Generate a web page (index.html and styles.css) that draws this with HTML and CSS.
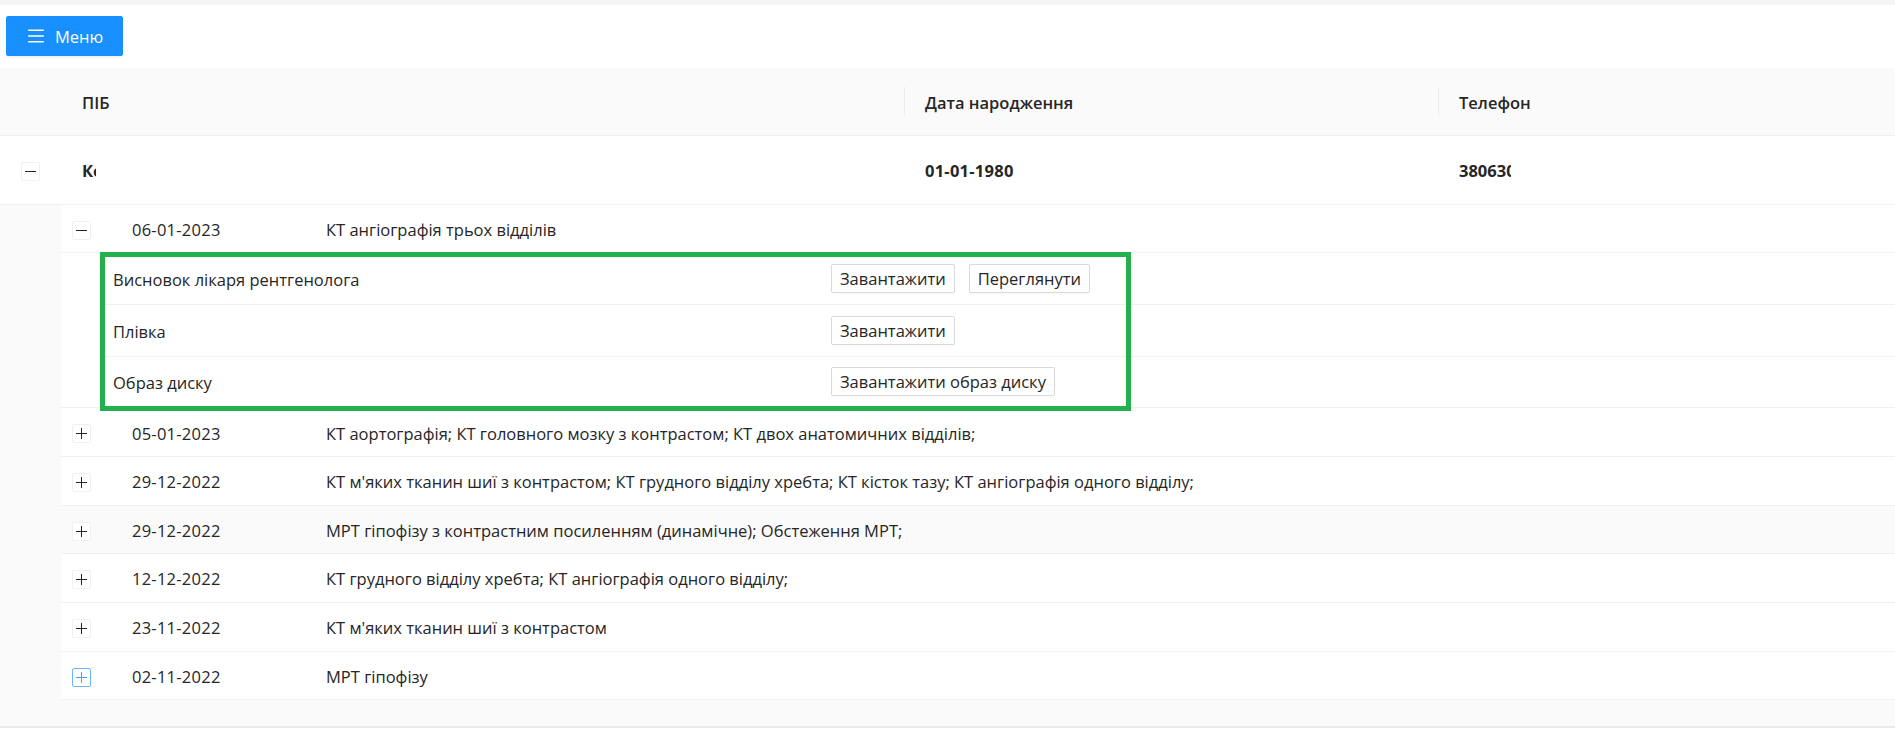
FILE: index.html
```html
<!DOCTYPE html>
<html lang="uk">
<head>
<meta charset="utf-8">
<title>Пацієнти</title>
<link rel="stylesheet" href="styles.css">
</head>
<body>
<div class="topbar"></div>
<div class="toolbar">
  <button class="btn-menu" type="button">
    <svg class="menu-icon" width="16" height="14" viewBox="0 0 16 14" aria-hidden="true">
      <path d="M0.75 1.25H15.25M0.75 7H15.25M0.75 12.75H15.25" stroke="#fff" stroke-width="1.5" stroke-linecap="round" fill="none"/>
    </svg>
    <span>Меню</span>
  </button>
</div>

<table class="patients">
  <colgroup>
    <col class="col-exp">
    <col class="col-name">
    <col class="col-dob">
    <col>
  </colgroup>
  <thead>
    <tr>
      <th></th>
      <th>ПІБ</th>
      <th class="sep">Дата народження</th>
      <th class="sep">Телефон</th>
    </tr>
  </thead>
  <tbody>
    <tr class="main-row">
      <td class="exp-cell"><button class="toggle" type="button" aria-label="Згорнути"></button></td>
      <td><span class="clip clip-name">Ко</span></td>
      <td class="date">01-01-1980</td>
      <td><span class="clip clip-phone">380630</span></td>
    </tr>
    <tr class="expanded-row">
      <td colspan="4" class="expanded-cell">
        <table class="visits">
          <colgroup>
            <col class="v-exp">
            <col class="v-date">
            <col>
          </colgroup>
          <tbody>
            <tr>
              <td class="v-exp-cell"><button class="toggle" type="button" aria-label="Згорнути"></button></td>
              <td class="date">06-01-2023</td>
              <td>КТ ангіографія трьох відділів</td>
            </tr>
            <tr class="files-row">
              <td colspan="3" class="files-cell">
                <div class="files">
                  <div class="file-row">
                    <div class="file-name">Висновок лікаря рентгенолога</div>
                    <div class="file-actions">
                      <button class="btn" type="button">Завантажити</button>
                      <button class="btn" type="button">Переглянути</button>
                    </div>
                  </div>
                  <div class="file-row">
                    <div class="file-name">Плівка</div>
                    <div class="file-actions">
                      <button class="btn" type="button">Завантажити</button>
                    </div>
                  </div>
                  <div class="file-row">
                    <div class="file-name">Образ диску</div>
                    <div class="file-actions">
                      <button class="btn" type="button">Завантажити образ диску</button>
                    </div>
                  </div>
                </div>
                <div class="highlight"></div>
              </td>
            </tr>
            <tr>
              <td class="v-exp-cell"><button class="toggle plus" type="button" aria-label="Розгорнути"></button></td>
              <td class="date">05-01-2023</td>
              <td>КТ аортографія; КТ головного мозку з контрастом; КТ двох анатомичних відділів;</td>
            </tr>
            <tr>
              <td class="v-exp-cell"><button class="toggle plus" type="button" aria-label="Розгорнути"></button></td>
              <td class="date">29-12-2022</td>
              <td>КТ м'яких тканин шиї з контрастом; КТ грудного відділу хребта; КТ кісток тазу; КТ ангіографія одного відділу;</td>
            </tr>
            <tr class="hovered">
              <td class="v-exp-cell"><button class="toggle plus" type="button" aria-label="Розгорнути"></button></td>
              <td class="date">29-12-2022</td>
              <td>МРТ гіпофізу з контрастним посиленням (динамічне); Обстеження МРТ;</td>
            </tr>
            <tr>
              <td class="v-exp-cell"><button class="toggle plus" type="button" aria-label="Розгорнути"></button></td>
              <td class="date">12-12-2022</td>
              <td>КТ грудного відділу хребта; КТ ангіографія одного відділу;</td>
            </tr>
            <tr>
              <td class="v-exp-cell"><button class="toggle plus" type="button" aria-label="Розгорнути"></button></td>
              <td class="date">23-11-2022</td>
              <td>КТ м'яких тканин шиї з контрастом</td>
            </tr>
            <tr>
              <td class="v-exp-cell"><button class="toggle plus focused" type="button" aria-label="Розгорнути"></button></td>
              <td class="date">02-11-2022</td>
              <td>МРТ гіпофізу</td>
            </tr>
          </tbody>
        </table>
      </td>
    </tr>
  </tbody>
</table>
</body>
</html>
```

FILE: styles.css
```css
* { box-sizing: border-box; }

html, body {
  margin: 0;
  padding: 0;
  background: #fff;
}

body {
  font-family: "Open Sans", "Noto Sans", sans-serif;
  font-size: 16.5px;
  line-height: 27.66px;
  color: #262626;
}

.topbar {
  height: 5px;
  background: #f5f5f5;
}

.toolbar {
  padding: 11px 6px 12px;
}

.btn-menu {
  display: inline-flex;
  align-items: center;
  gap: 11px;
  width: 117px;
  height: 40px;
  padding: 0 0 0 21px;
  border: 1px solid #1890ff;
  border-radius: 2px;
  background: #1890ff;
  color: #fff;
  font-family: inherit;
  font-size: 16.5px;
  box-shadow: 0 2px 0 rgba(0, 0, 0, 0.045);
  cursor: pointer;
}

.menu-icon { display: block; }

table {
  border-collapse: collapse;
  border-spacing: 0;
  table-layout: fixed;
  width: 100%;
}

.col-exp { width: 61px; }
.col-name { width: 843px; }
.col-dob { width: 534px; }

.date { letter-spacing: 0.25px; }

.patients th {
  position: relative;
  padding: 20.5px 21px 18.5px;
  background: #fafafa;
  border-bottom: 1px solid #f0f0f0;
  text-align: left;
  font-weight: 600;
  white-space: nowrap;
}

.patients th.sep::before {
  content: "";
  position: absolute;
  left: 0;
  top: 50%;
  width: 1px;
  height: 28px;
  transform: translateY(-50%);
  background: rgba(0, 0, 0, 0.06);
}

.main-row td {
  padding: 21px 21px 19.3px;
  border-bottom: 1px solid #f0f0f0;
  font-weight: 700;
  white-space: nowrap;
}

.main-row td.exp-cell {
  padding: 20px 0;
  text-align: center;
}

.clip {
  display: inline-block;
  overflow: hidden;
  white-space: nowrap;
  vertical-align: top;
}

.clip-name { width: 13.5px; }
.clip-phone { width: 52px; }

.expanded-cell {
  padding: 0 0 26px 61px;
  background: #fafafa;
  border-bottom: 2px solid #e9e9e9;
}

.visits {
  background: #fff;
}

.v-exp { width: 50px; }
.v-date { width: 194px; }

.visits td {
  padding: 11.2px 21px 8.8px;
  border-bottom: 1px solid #f0f0f0;
  white-space: nowrap;
}

.visits td.v-exp-cell {
  padding: 10px 0 10px 11px;
}

.visits tr.hovered td {
  background: #fafafa;
}

.toggle {
  position: relative;
  display: inline-block;
  width: 19px;
  height: 19px;
  padding: 0;
  margin: 0;
  border: 1px solid #f0f0f0;
  border-radius: 2px;
  background: #fff;
  color: #262626;
  vertical-align: middle;
  cursor: pointer;
}

.toggle::before {
  content: "";
  position: absolute;
  left: 3px;
  right: 3px;
  top: 8px;
  height: 1px;
  background: currentColor;
}

.toggle.plus::after {
  content: "";
  position: absolute;
  top: 3px;
  bottom: 3px;
  left: 8px;
  width: 1px;
  background: currentColor;
}

.toggle.focused {
  border-color: #69b6ff;
  color: #40a9ff;
}

.visits td.files-cell {
  position: relative;
  padding: 0;
  border-bottom: 1px solid #f0f0f0;
}

.files {
  margin-left: 39px;
}

.file-row {
  display: flex;
  align-items: center;
  padding: 10.85px 0 10.85px 13px;
  border-bottom: 1px solid #f0f0f0;
}

.file-row:last-child {
  border-bottom: none;
}

.file-name {
  width: 718px;
  flex: none;
  padding-top: 3px;
  line-height: 24px;
}

.file-actions {
  display: flex;
  gap: 14px;
}

.btn {
  height: 29px;
  padding: 1px 8px 0;
  border: 1px solid #d9d9d9;
  border-radius: 2px;
  background: #fff;
  color: #262626;
  font-family: inherit;
  font-size: 16.5px;
  line-height: 26px;
  box-shadow: 0 2px 0 rgba(0, 0, 0, 0.016);
  cursor: pointer;
}

.highlight {
  position: absolute;
  left: 39px;
  top: -1px;
  width: 1031px;
  height: 159px;
  border: 5px solid #22b14c;
  pointer-events: none;
}
```
